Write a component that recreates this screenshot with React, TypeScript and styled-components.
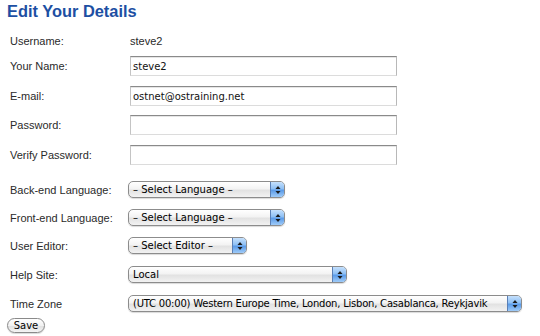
import React from "react";
import styled, { createGlobalStyle } from "styled-components";

const Global = createGlobalStyle`
  html, body { margin: 0; padding: 0; background: #fff; }
  body { font-family: "Liberation Sans", Arial, sans-serif; }
`;

const Page = styled.div`
  width: 540px;
  height: 336px;
  padding-left: 7px;
  box-sizing: border-box;
  overflow: hidden;
`;

const Title = styled.h1`
  margin: 2px 0 0 0;
  font-size: 16.4px;
  line-height: 19px;
  font-weight: bold;
  color: #1d4fa3;
  font-family: "Liberation Sans", Arial, sans-serif;
`;

const Row = styled.div<{ $top: number; $h: number }>`
  display: flex;
  align-items: center;
  margin-top: ${(p) => p.$top}px;
  height: ${(p) => p.$h}px;
`;

const Label = styled.div`
  width: 118px;
  padding-left: 3px;
  font-size: 11px;
  color: #2a2a2a;
  flex: none;
`;

const Value = styled.div`
  margin-left: 2px;
  font-size: 11px;
  color: #2a2a2a;
`;

const TextInput = styled.input`
  margin: 0 0 0 2px;
  width: 267px;
  height: 20px;
  box-sizing: border-box;
  padding: 0 2px;
  border: 1px solid #c4c4c4;
  border-top-color: #8a8a8a;
  border-right-color: #b8b8b8;
  border-bottom-color: #dcdcdc;
  box-shadow: inset 0 1px 0 #e6e6e6;
  font-family: "DejaVu Sans", "Lucida Grande", sans-serif;
  font-size: 10px;
  color: #111;
  background: #fff;
  outline: none;
`;

const SelectBox = styled.div<{ $w: number }>`
  display: flex;
  width: ${(p) => p.$w}px;
  height: 17px;
  box-sizing: border-box;
  border: 1px solid #8c8c8c;
  border-radius: 5px;
  overflow: hidden;
  background: linear-gradient(#ffffff 0%, #f3f3f3 45%, #e2e2e2 55%, #f2f2f2 100%);
  box-shadow: 0 1px 1px rgba(0, 0, 0, 0.15);
`;

const SelectText = styled.div<{ $tight?: boolean }>`
  flex: 1;
  padding-left: 4px;
  font-family: "DejaVu Sans", "Lucida Grande", sans-serif;
  font-size: 10px;
  line-height: 15px;
  letter-spacing: ${(p) => (p.$tight ? "-0.22px" : "0")};
  color: #000;
  white-space: nowrap;
  overflow: hidden;
`;

const ArrowCap = styled.div`
  width: 13px;
  flex: none;
  border-left: 1px solid #5a7fb5;
  background: linear-gradient(#c5e0fc 0%, #8ec0f5 45%, #5b9be8 55%, #9fcbf8 100%);
  display: flex;
  align-items: center;
  justify-content: center;
`;

const SaveButton = styled.button`
  margin: 0;
  width: 38px;
  height: 15px;
  padding: 0;
  border: 1px solid #8a8a8a;
  border-radius: 8px;
  background: linear-gradient(#ffffff 0%, #f1f1f1 50%, #e0e0e0 55%, #f5f5f5 100%);
  font-family: "DejaVu Sans", "Lucida Grande", sans-serif;
  font-size: 10px;
  line-height: 13px;
  color: #000;
  box-shadow: 0 1px 1px rgba(0, 0, 0, 0.15);
`;

const Arrows = () => (
  <svg width="6" height="10" viewBox="0 0 6 10">
    <path d="M3 1 L5.5 4 L0.5 4 Z" fill="#1a1a1a" />
    <path d="M3 9 L5.5 6 L0.5 6 Z" fill="#1a1a1a" />
  </svg>
);

const Select = ({ w, text, tight }: { w: number; text: string; tight?: boolean }) => (
  <SelectBox $w={w}>
    <SelectText $tight={tight}>{text}</SelectText>
    <ArrowCap>
      <Arrows />
    </ArrowCap>
  </SelectBox>
);

export default function App() {
  return (
    <>
      <Global />
      <Page>
        <Title>Edit Your Details</Title>
        <Row $top={10} $h={20}>
          <Label>Username:</Label>
          <Value>steve2</Value>
        </Row>
        <Row $top={5} $h={20}>
          <Label>Your Name:</Label>
          <TextInput defaultValue="steve2" />
        </Row>
        <Row $top={10} $h={20}>
          <Label>E-mail:</Label>
          <TextInput defaultValue="ostnet@ostraining.net" />
        </Row>
        <Row $top={9} $h={20}>
          <Label>Password:</Label>
          <TextInput type="password" />
        </Row>
        <Row $top={10} $h={20}>
          <Label>Verify Password:</Label>
          <TextInput type="password" />
        </Row>
        <Row $top={16} $h={17}>
          <Label>Back-end Language:</Label>
          <Select w={157} text="– Select Language –" />
        </Row>
        <Row $top={11} $h={17}>
          <Label>Front-end Language:</Label>
          <Select w={157} text="– Select Language –" />
        </Row>
        <Row $top={11} $h={17}>
          <Label>User Editor:</Label>
          <Select w={119} text="– Select Editor –" />
        </Row>
        <Row $top={12} $h={17}>
          <Label>Help Site:</Label>
          <Select w={219} text="Local" />
        </Row>
        <Row $top={12} $h={17}>
          <Label>Time Zone</Label>
          <Select
            w={394}
            tight
            text="(UTC 00:00) Western Europe Time, London, Lisbon, Casablanca, Reykjavik"
          />
        </Row>
        <Row $top={6} $h={15}>
          <SaveButton>Save</SaveButton>
        </Row>
      </Page>
    </>
  );
}
